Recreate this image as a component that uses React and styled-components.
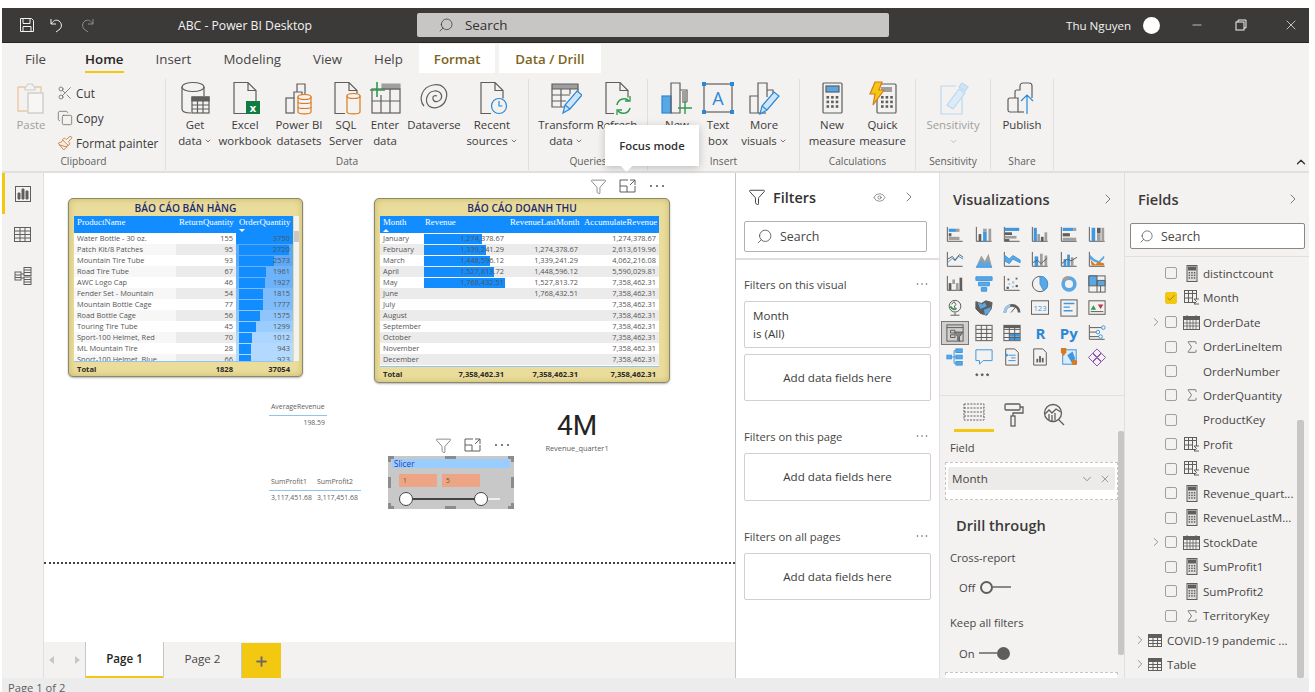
import React from "react";
import styled, { createGlobalStyle } from "styled-components";
import { Scissors, Copy, Paintbrush, Search, Filter, ChevronRight, ChevronDown, ChevronUp, X, Minus, Eye, Check, Plus, Sigma } from "lucide-react";

const D = "#5f5e5c";
const B = "#3f97e0";
const L = "#9fc5e8";
const M = "#a19f9d";
const YELLOW = "#f2c811";
const UI = `"Open Sans", "Noto Sans", sans-serif`;

const GlobalStyle = createGlobalStyle`
  html, body { margin: 0; padding: 0; background: #fff; }
  body { font-family: ${UI}; color: #323130; }
  * { box-sizing: border-box; }
`;

const Page = styled.div`
  width: 1315px;
  height: 692px;
  padding: 8px 6px 0 2px;
  overflow: hidden;
  background: #fff;
  display: flex;
  flex-direction: column;
`;

/* title bar */
const TitleBar = styled.div`
  flex: none;
  height: 35px;
  background: #3b3a39;
  border-bottom: 1px solid #252423;
  display: flex;
  align-items: center;
  color: #f3f2f1;
`;
const QuickIcon = styled.span`
  width: 30px;
  display: flex;
  justify-content: center;
  opacity: ${(p) => (p.$dim ? 0.45 : 1)};
`;
const QuickGroup = styled.div`
  display: flex;
  width: 176px;
  padding-left: 10px;
`;
const AppName = styled.div`
  width: 239px;
  font-size: 12.2px;
`;
const SearchBar = styled.div`
  width: 472px;
  height: 24px;
  background: #c8c6c4;
  border-radius: 2px;
  display: flex;
  align-items: center;
  gap: 11px;
  padding-left: 21px;
  font-size: 13.4px;
  color: #323130;
`;
const UserName = styled.div`
  margin-left: 177px;
  width: 77px;
  font-size: 11.6px;
`;
const Avatar = styled.div`
  width: 17px;
  height: 17px;
  border-radius: 50%;
  background: #fff;
`;
const WindowBtn = styled.span`
  display: flex;
  justify-content: center;
  width: ${(p) => p.$w}px;
  margin-left: ${(p) => p.$ml || 0}px;
`;

/* tabs */
const TabRow = styled.div`
  flex: none;
  height: 30px;
  background: #f3f2f1;
  display: flex;
  padding-left: 7px;
`;
const Tab = styled.div`
  position: relative;
  padding: 0 16px;
  margin-right: ${(p) => p.$mr || 0}px;
  font-size: 13.3px;
  line-height: 32px;
  color: ${(p) => (p.$active ? "#252423" : "#484644")};
  font-weight: ${(p) => (p.$active ? 600 : 400)};
  ${(p) =>
    p.$active &&
    `&::after { content: ""; position: absolute; left: 16px; right: 16px; bottom: 0; height: 2.5px; background: ${YELLOW}; }`}
`;
const ContextTab = styled.div`
  background: #fff;
  padding: 0 15px;
  margin: 1px 4px 0 0;
  width: ${(p) => p.$w}px;
  font-size: 13.3px;
  font-weight: 600;
  line-height: 31px;
  color: #7c6420;
  white-space: nowrap;
  text-align: center;
`;

/* ribbon */
const Ribbon = styled.div`
  position: relative;
  flex: none;
  height: 100px;
  background: #f3f2f1;
  border-bottom: 2px solid #e1dfdd;
  display: flex;
  padding-top: 6px;
`;
const Group = styled.div`
  flex: none;
  width: ${(p) => p.$w}px;
  height: 91px;
  border-right: ${(p) => (p.$last ? "1px solid #e1dfdd" : "1px solid #e1dfdd")};
  display: flex;
  flex-direction: column;
`;
const GroupBody = styled.div`
  flex: 1;
  display: flex;
  padding-left: ${(p) => p.$pad || 0}px;
`;
const GroupLabel = styled.div`
  height: 13px;
  margin-bottom: 2px;
  font-size: 10.2px;
  line-height: 13px;
  color: #605e5c;
  text-align: center;
`;
const RibbonBtn = styled.div`
  flex: none;
  width: ${(p) => p.$w}px;
  display: flex;
  flex-direction: column;
  align-items: center;
  color: ${(p) => (p.$off ? "#a19f9d" : "#3b3a39")};
  font-size: 11.4px;
  line-height: 16px;
`;
const BtnIcon = styled.div`
  height: 37px;
  display: flex;
  align-items: center;
  margin-bottom: 1px;
`;
const BtnLine = styled.span`
  white-space: nowrap;
  display: flex;
  align-items: center;
  gap: 2px;
`;
const SmallList = styled.div`
  display: flex;
  flex-direction: column;
  gap: 2px;
  padding-top: 2px;
`;
const SmallBtn = styled.div`
  height: 23px;
  display: flex;
  align-items: center;
  gap: 3px;
  font-size: 11.8px;
  color: #3b3a39;
  white-space: nowrap;
`;
const Collapse = styled.span`
  position: absolute;
  right: 1px;
  bottom: 2px;
  display: flex;
`;
const Tooltip = styled.div`
  position: absolute;
  left: 605px;
  top: 125px;
  z-index: 5;
  width: 94px;
  height: 41px;
  background: #fff;
  box-shadow: 0 2px 8px rgba(0, 0, 0, 0.22);
  font-size: 11.3px;
  font-weight: 600;
  line-height: 41px;
  text-align: center;
  color: #323130;
  &::after {
    content: "";
    position: absolute;
    left: 17px;
    bottom: -4px;
    width: 9px;
    height: 9px;
    background: #fff;
    transform: rotate(45deg);
  }
`;

/* main */
const Main = styled.div`
  flex: none;
  height: 505px;
  display: flex;
`;
const Rail = styled.div`
  flex: none;
  width: 42px;
  background: #f3f2f1;
  border-right: 1px solid #e1dfdd;
  display: flex;
  flex-direction: column;
`;
const RailItem = styled.div`
  height: 41px;
  display: flex;
  align-items: center;
  justify-content: center;
  border-left: 3px solid ${(p) => (p.$active ? YELLOW : "transparent")};
  padding-right: 3px;
`;
const Center = styled.div`
  flex: none;
  width: 691px;
  display: flex;
  flex-direction: column;
`;
const Canvas = styled.div`
  position: relative;
  flex: none;
  height: 469px;
  background: #fff;
`;
const PageEdge = styled.div`
  position: absolute;
  left: 0;
  right: 0;
  top: 389px;
  border-top: 2px dotted #444;
`;
const Card = styled.div`
  position: absolute;
  left: ${(p) => p.$x}px;
  top: ${(p) => p.$y}px;
  width: ${(p) => p.$w}px;
  height: ${(p) => p.$h}px;
  padding: 0 5px;
  border: 1px solid #8b8871;
  border-radius: 5px;
  background: #eadd9c;
  box-shadow: inset 0 0 7px #c9b869, 0 1px 2px rgba(0, 0, 0, 0.3);
`;
const CardTitle = styled.div`
  height: 17px;
  font-size: 10.2px;
  font-weight: 600;
  line-height: 18px;
  text-align: center;
  color: #1e2a70;
`;
const TableRow = styled.div`
  display: grid;
  grid-template-columns: ${(p) => p.$cols};
  height: ${(p) => p.$h || 11}px;
`;
const HeadRow = styled(TableRow)`
  background: #118dff;
  color: #fff;
  font-family: "Liberation Serif", serif;
  font-size: 8.8px;
  line-height: 11px;
`;
const HeadCell = styled.div`
  position: relative;
  padding: 1px 0 0 3px;
  white-space: nowrap;
  &::after {
    content: "";
    display: ${(p) => (p.$sort ? "block" : "none")};
    position: absolute;
    left: 3px;
    bottom: 1px;
    border-left: 3px solid transparent;
    border-right: 3px solid transparent;
    ${(p) => (p.$sort === "up" ? "border-bottom: 3px solid #fff;" : "border-top: 3px solid #fff;")}
  }
`;
const Rows = styled.div`
  height: ${(p) => p.$h}px;
  overflow: hidden;
  background: #fff;
  border-bottom: 1px solid #8ec5f5;
`;
const Cell = styled.div`
  position: relative;
  padding: 0 3px;
  font-size: 7.4px;
  line-height: 11px;
  color: #555;
  white-space: nowrap;
  text-align: ${(p) => (p.$right ? "right" : "left")};
  background: ${(p) => p.$bg || "transparent"};
`;
const CellBar = styled.div`
  position: absolute;
  left: ${(p) => p.$left}px;
  top: 0.5px;
  bottom: 0.5px;
  background: #118dff;
`;
const CellText = styled.span`
  position: relative;
`;
const TotalRow = styled(TableRow)`
  height: 15px;
  font-size: 7.6px;
  font-weight: 700;
  line-height: 14px;
  color: #2b2a29;
`;
const TotalCell = styled.div`
  padding: 0 3px;
  text-align: ${(p) => (p.$right ? "right" : "left")};
`;
const TableWrap = styled.div`
  width: ${(p) => p.$w}px;
`;
const ScrollTrack = styled.div`
  position: absolute;
  left: 225px;
  top: 17px;
  width: 5px;
  height: 145px;
  background: #f2f2f2;
  &::after {
    content: "";
    position: absolute;
    left: 0;
    right: 0;
    top: 15px;
    height: 11px;
    background: #c8c8c8;
  }
`;

const FreeText = styled.div`
  position: absolute;
  left: ${(p) => p.$x}px;
  top: ${(p) => p.$y}px;
  width: ${(p) => p.$w}px;
  font-size: ${(p) => p.$size || 7}px;
  line-height: ${(p) => p.$lh || 10}px;
  color: ${(p) => p.$color || "#605e5c"};
  text-align: ${(p) => p.$align || "left"};
  white-space: nowrap;
`;
const BigNumber = styled(FreeText)`
  font-family: Roboto, sans-serif;
  font-weight: 400;
`;
const MiniTable = styled.div`
  position: absolute;
  left: ${(p) => p.$x}px;
  top: ${(p) => p.$y}px;
  width: ${(p) => p.$w}px;
  display: grid;
  grid-template-columns: ${(p) => p.$cols};
  font-size: 6.9px;
  line-height: 11px;
  color: #605e5c;
  white-space: nowrap;
`;
const MiniHead = styled.div`
  padding: 0 2px 3px;
  border-bottom: 1px solid #8cc4f4;
`;
const MiniCell = styled.div`
  padding: 1px 2px 0;
  text-align: ${(p) => (p.$right ? "right" : "left")};
`;
const HeaderIcons = styled.div`
  position: absolute;
  left: ${(p) => p.$x}px;
  top: ${(p) => p.$y}px;
  display: flex;
  align-items: center;
  height: 18px;
`;
const HeaderIcon = styled.span`
  width: 29px;
  display: flex;
  justify-content: center;
`;

const Slicer = styled.div`
  position: absolute;
  left: 344px;
  top: 283px;
  width: 126px;
  height: 53px;
  background: #c8c8c8;
  padding: 3px 4px;
`;
const SlicerTitle = styled.div`
  height: 9px;
  background: #99ccff;
  padding-left: 2px;
  font-size: 8.2px;
  line-height: 10px;
  color: #2a3fb0;
`;
const SlicerInputs = styled.div`
  display: flex;
  gap: 5px;
  margin: 6px 0 0 7px;
`;
const SlicerInput = styled.div`
  width: 38px;
  height: 13px;
  background: #eea586;
  padding-left: 4px;
  font-size: 6.6px;
  line-height: 13px;
  color: #555;
`;
const SlicerTrack = styled.div`
  position: relative;
  height: 2px;
  width: 94px;
  margin: 11px 0 0 14px;
  background: linear-gradient(90deg, #444 80%, #eee 80%);
`;
const SlicerKnob = styled.div`
  position: absolute;
  top: -6px;
  left: ${(p) => p.$x}px;
  width: 14px;
  height: 14px;
  border-radius: 50%;
  border: 1.5px solid #444;
  background: #fff;
`;
const Handle = styled.div`
  position: absolute;
  background: ${(p) => (p.$corner ? "transparent" : "#8c8c8c")};
  width: ${(p) => (p.$corner ? 6 : p.$wide ? 11 : 3)}px;
  height: ${(p) => (p.$corner ? 6 : p.$wide ? 3 : 11)}px;
  ${(p) => p.$pos}
  ${(p) => p.$corner && p.$corner.map((s) => `border-${s}: 3px solid #8c8c8c;`).join("")}
`;

const PageTabs = styled.div`
  flex: 1;
  background: #f3f2f1;
  display: flex;
  align-items: stretch;
`;
const TabArrows = styled.div`
  width: 41px;
  display: flex;
  align-items: center;
  justify-content: space-between;
  padding: 0 5px 4px 5px;
`;
const Arrow = styled.span`
  width: 0;
  height: 0;
  border-top: 4px solid transparent;
  border-bottom: 4px solid transparent;
  ${(p) => (p.$right ? "border-left: 5px solid #c8c6c4;" : "border-right: 5px solid #c8c6c4;")}
`;
const PageTab = styled.div`
  width: 78px;
  margin-bottom: 1px;
  border-left: 1px solid #c8c6c4;
  border-bottom: 4px solid ${(p) => (p.$active ? YELLOW : "transparent")};
  background: ${(p) => (p.$active ? "#fff" : "transparent")};
  font-size: 11.6px;
  font-weight: ${(p) => (p.$active ? 600 : 400)};
  color: ${(p) => (p.$active ? "#252423" : "#484644")};
  line-height: 34px;
  text-align: center;
`;
const AddPage = styled.div`
  width: 40px;
  margin: 1px 0 2px;
  background: ${YELLOW};
  border-left: 1px solid #c8c6c4;
  display: flex;
  align-items: center;
  justify-content: center;
`;

/* filters */
const FiltersPane = styled.div`
  flex: none;
  width: 205px;
  background: #fff;
  border-left: 1px solid #c8c6c4;
  border-right: 1px solid #e1dfdd;
`;
const PaneHead = styled.div`
  height: 48px;
  padding: 0 9px 0 12px;
  display: flex;
  align-items: center;
  font-size: 14.4px;
  font-weight: 600;
  color: #323130;
`;
const PaneTitle = styled.span`
  flex: 1;
  margin-left: ${(p) => p.$ml || 0}px;
`;
const PaneTool = styled.span`
  display: flex;
  width: ${(p) => p.$w}px;
  justify-content: center;
`;
const SearchBox = styled.div`
  width: ${(p) => p.$w}px;
  height: ${(p) => p.$h}px;
  margin-left: ${(p) => p.$ml}px;
  background: #fff;
  border: 1px solid ${(p) => p.$line};
  border-radius: 2px;
  display: flex;
  align-items: center;
  gap: 7px;
  padding-left: ${(p) => p.$pad}px;
  font-size: 12.4px;
  color: #484644;
`;
const PaneRule = styled.div`
  height: 2px;
  margin-top: ${(p) => p.$mt}px;
  background: #e1dfdd;
`;
const FilterSection = styled.div`
  margin-top: ${(p) => p.$mt}px;
  padding-left: 8px;
`;
const FilterHead = styled.div`
  width: 187px;
  height: 20px;
  margin-bottom: 7px;
  padding-right: 3px;
  display: flex;
  align-items: center;
  justify-content: space-between;
  font-size: 11.2px;
  color: #484644;
`;
const FilterBox = styled.div`
  width: 187px;
  height: ${(p) => p.$h}px;
  margin-top: ${(p) => p.$mt || 0}px;
  border: 1px solid #d2d0ce;
  border-radius: 2px;
  font-size: 11.6px;
  color: #3b3a39;
  display: flex;
  flex-direction: column;
  justify-content: center;
  align-items: ${(p) => (p.$left ? "flex-start" : "center")};
  line-height: 18px;
  padding-left: ${(p) => (p.$left ? 8 : 0)}px;
`;

/* visualizations */
const VizPane = styled.div`
  position: relative;
  flex: none;
  width: 185px;
  background: #f3f2f1;
  border-right: 1px solid #e1dfdd;
  overflow: hidden;
`;
const VizHead = styled.div`
  height: 50px;
  padding: 2px 8px 0 13px;
  display: flex;
  align-items: center;
  font-size: 14.6px;
  font-weight: 600;
  color: #3b3a39;
`;
const VizGrid = styled.div`
  display: grid;
  grid-template-columns: repeat(6, 28.4px);
  grid-auto-rows: 24.4px;
  padding-left: 1px;
  height: 171px;
`;
const VizCell = styled.div`
  display: flex;
  align-items: center;
  justify-content: center;
  ${(p) => p.$on && "background: #d2d0ce; outline: 1.5px solid #7a7876; outline-offset: -1.5px;"}
`;
const VizLetter = styled.span`
  font-size: ${(p) => p.$size}px;
  font-weight: 700;
  color: #2b88d8;
`;
const VizTabs = styled.div`
  margin-top: 1px;
  border-top: 1px solid #e1dfdd;
  height: 37px;
  display: flex;
  padding-left: 14px;
`;
const VizTab = styled.div`
  width: 40px;
  display: flex;
  justify-content: center;
  padding-top: 7px;
  border-bottom: 3px solid ${(p) => (p.$on ? YELLOW : "transparent")};
`;
const WellLabel = styled.div`
  margin: 8px 0 0 10px;
  font-size: 11.2px;
  line-height: 16px;
  color: #484644;
`;
const Well = styled.div`
  width: 173px;
  height: 38px;
  margin: 6px 0 0 5px;
  background: #fff;
  border: 1px dashed #c8c6c4;
  padding: 4px 2px;
`;
const Pill = styled.div`
  height: 23px;
  background: #edebe9;
  border-radius: 2px;
  display: flex;
  align-items: center;
  padding: 0 4px;
  gap: 5px;
  font-size: 11.6px;
  color: #484644;
`;
const PillName = styled.span`
  flex: 1;
`;
const DrillTitle = styled.div`
  margin: 14px 0 0 16px;
  font-size: 14.6px;
  font-weight: 600;
  line-height: 22px;
  color: #3b3a39;
`;
const OptionLabel = styled.div`
  margin: ${(p) => p.$mt}px 0 0 10px;
  font-size: 11.2px;
  line-height: 16px;
  color: #484644;
`;
const ToggleRow = styled.div`
  margin: ${(p) => p.$mt}px 0 0 19px;
  height: 16px;
  display: flex;
  align-items: center;
  font-size: 11.2px;
  color: #484644;
`;
const ToggleName = styled.span`
  width: ${(p) => p.$w}px;
`;
const Knob = styled.span`
  width: 13px;
  height: 13px;
  border-radius: 50%;
  border: 2px solid #5f5e5c;
  background: ${(p) => (p.$on ? "#5f5e5c" : "transparent")};
`;
const KnobLine = styled.span`
  width: ${(p) => p.$w}px;
  height: 2px;
  background: #8a8886;
`;
const WellStub = styled.div`
  width: 173px;
  height: 20px;
  margin: 11px 0 0 5px;
  background: #fff;
  border: 1px dashed #c8c6c4;
`;
const Scroller = styled.div`
  position: absolute;
  left: ${(p) => p.$x}px;
  top: ${(p) => p.$y}px;
  width: ${(p) => p.$w}px;
  height: ${(p) => p.$h}px;
  background: #c8c6c4;
  border-radius: 2px;
`;

/* fields */
const FieldsPane = styled.div`
  position: relative;
  flex: none;
  width: 184px;
  background: #f3f2f1;
`;
const FieldRule = styled.div`
  height: 1px;
  margin-top: 7px;
  background: #e1dfdd;
`;
const FieldList = styled.div`
  padding-top: 4px;
`;
const FieldRow = styled.div`
  height: 24.46px;
  display: flex;
  align-items: center;
  padding-left: ${(p) => p.$pad}px;
  font-size: 11.6px;
  color: #484644;
  white-space: nowrap;
`;
const Chevron = styled.span`
  width: ${(p) => p.$w}px;
  display: flex;
`;
const CheckBox = styled.span`
  flex: none;
  width: 12px;
  height: 12px;
  margin-right: 6px;
  border-radius: 2px;
  border: 1px solid ${(p) => (p.$on ? YELLOW : "#a19f9d")};
  background: ${(p) => (p.$on ? YELLOW : "transparent")};
  display: flex;
  align-items: center;
  justify-content: center;
`;
const FieldIcon = styled.span`
  flex: none;
  width: ${(p) => p.$w}px;
  display: flex;
  justify-content: center;
`;

const StatusBar = styled.div`
  flex: none;
  height: 14px;
  background: #ececec;
  padding-left: 6px;
  font-size: 11.2px;
  line-height: 19px;
  color: #605e5c;
`;

/* drawings */
const Svg = ({ w = 32, h = 34, vb, children, stroke = D, sw = 1.2 }) => (
  <svg width={w} height={h} viewBox={vb || `0 0 ${w} ${h}`} fill="none" stroke={stroke} strokeWidth={sw}>
    {children}
  </svg>
);
const DOC = "M5 1.5h14l8 8v23H5z M19 1.5v8h8";

const PasteIcon = () => (
  <Svg w={30} h={32} stroke="#e8c9a0">
    <path d="M2 5h7M19 5h6v5M2 5v24h9" strokeWidth="1.4" />
    <path d="M9 6l3-4h4l3 4v2H9z" stroke="#cfcdcb" />
    <rect x="12" y="11" width="15" height="20" stroke="#c8c6c4" fill="#f7f6f5" />
  </Svg>
);
const GetDataIcon = () => (
  <Svg>
    <ellipse cx="14" cy="6" rx="11" ry="4.5" />
    <path d="M3 6v22c0 2.5 4 4 9 4M25 6v9" />
    <rect x="13" y="16" width="17" height="16" fill="#f3f2f1" />
    <path d="M13 16h17v4H13z" fill={D} />
    <path d="M18.5 20v12M24 20v12M13 24h17M13 28h17" />
  </Svg>
);
const ExcelIcon = () => (
  <Svg>
    <path d={DOC} />
    <rect x="17" y="20" width="14" height="13" fill="#107c41" stroke="none" />
    <text x="24" y="30.5" fontSize="11" fontWeight="700" fill="#fff" stroke="none" textAnchor="middle" fontFamily="Open Sans">x</text>
  </Svg>
);
const Cylinder = ({ x, y, w, h }) => (
  <g stroke="#d97a1e" fill="#f3f2f1">
    <path d={`M${x} ${y + 2}v${h - 4}c0 2.5 ${w} 2.5 ${w} 0v${-(h - 4)}z`} />
    <ellipse cx={x + w / 2} cy={y + 2} rx={w / 2} ry="2.5" />
  </g>
);
const DatasetsIcon = () => (
  <Svg>
    <rect x="3" y="17" width="8" height="15" />
    <path d="M11 17v-6h8v5M14 11V3h8v10" />
    <Cylinder x={15} y={14} w={13} h={19} />
    <path d="M15 21c0 2 13 2 13 0M15 26c0 2 13 2 13 0" stroke="#d97a1e" />
  </Svg>
);
const SqlIcon = () => (
  <Svg>
    <path d="M15 32.5H5v-31h14l8 8v3M19 1.5v8h8" />
    <Cylinder x={17} y={13} w={13} h={20} />
  </Svg>
);
const EnterIcon = () => (
  <Svg>
    <path d="M13 3h18v5H13z" fill={M} stroke={M} />
    <rect x="3" y="8" width="28" height="24" />
    <path d="M12 14v18M21 8v24M3 20h28" />
    <path d="M1 9h15M8 1v15" stroke="#2e9a4e" strokeWidth="1.6" />
  </Svg>
);
const DataverseIcon = () => (
  <Svg>
    <path d="M6 25C0 18 4 6 15 4c9-2 16 5 13 14-2 8-12 11-17 7C6 20 9 11 16 10c6-1 9 4 7 8-2 3-7 4-8 0-1-3 2-4 4-3" />
  </Svg>
);
const RecentIcon = () => (
  <Svg>
    <path d="M15 32.5H5v-31h14l8 8v8M19 1.5v8h8" />
    <circle cx="23" cy="25" r="7.5" stroke="#2b88d8" />
    <path d="M23 20v5h3.5" stroke="#2b88d8" />
  </Svg>
);
const Pencil = ({ dx = 0, dy = 0 }) => (
  <g transform={`translate(${dx} ${dy})`} stroke="#2b88d8">
    <path d="M6 26l2-8L20 4l5 4-12 14z" fill="#cfe4f7" />
    <path d="M8 18l5 4" />
  </g>
);
const TransformIcon = () => (
  <Svg>
    <path d="M2 3h26v5H2z" fill={M} stroke={D} />
    <path d="M2 8v18h14M28 8v4M11 8v18M20 8v5M2 14h18M2 20h14" />
    <Pencil dx={7} dy={6} />
  </Svg>
);
const RefreshIcon = () => (
  <Svg>
    <path d="M13 32.5H5v-31h14l8 8v7M19 1.5v8h8" />
    <path d="M16 24a7 7 0 0 1 12-4M29 27a7 7 0 0 1-12 3" stroke="#2e9a4e" strokeWidth="1.5" />
    <path d="M29 15v5h-5M16 34v-5h5" stroke="#2e9a4e" strokeWidth="1.3" />
  </Svg>
);
const NewVisualIcon = () => (
  <Svg>
    <rect x="1" y="15" width="9" height="17" fill="#5aa7e6" stroke="#2b88d8" />
    <path d="M10 32V2h9v30H10zM19 9h7v12" />
    <path d="M21 10h5v12h-5z" fill="#a19f9d" stroke="none" />
    <path d="M17 27h14M24 20v13" stroke="#2e9a4e" strokeWidth="1.4" />
  </Svg>
);
const TextBoxIcon = () => (
  <Svg>
    <rect x="2" y="3" width="28" height="28" stroke={D} />
    <g fill="#2b88d8" stroke="none">
      <rect x="0" y="1" width="4" height="4" />
      <rect x="28" y="1" width="4" height="4" />
      <rect x="0" y="29" width="4" height="4" />
      <rect x="28" y="29" width="4" height="4" />
    </g>
    <text x="16" y="24" fontSize="18" fill="#2b88d8" stroke="none" textAnchor="middle" fontFamily="Open Sans">A</text>
  </Svg>
);
const MoreVisualsIcon = () => (
  <Svg>
    <path d="M2 32V15h8v17zM10 15V2h9v14M19 9h6v6" />
    <path d="M10 32h8" />
    <Pencil dx={6} dy={7} />
  </Svg>
);
const CalcKeys = ({ x, y, n = 3, s = 2.6, gap = 4.6 }) => (
  <g fill={D} stroke="none">
    {[0, 1, 2].map((r) =>
      Array.from({ length: n }).map((_, c) => <rect key={`${r}${c}`} x={x + c * gap} y={y + r * gap} width={s} height={s} />)
    )}
  </g>
);
const MeasureIcon = () => (
  <Svg>
    <rect x="7" y="2" width="19" height="30" rx="1" />
    <rect x="10" y="5" width="13" height="6" fill="#5aa7e6" stroke={D} />
    <CalcKeys x={10.5} y={15} />
  </Svg>
);
const QuickIconSvg = () => (
  <Svg>
    <rect x="10" y="3" width="19" height="29" rx="1" />
    <rect x="14" y="6" width="11" height="5" fill={M} stroke="none" />
    <CalcKeys x={14} y={15} />
    <path d="M8 1h7l-3 8h5L6 24l2-11H3z" fill="#f2c811" stroke="#d97a1e" />
  </Svg>
);
const SensitivityIcon = () => (
  <Svg stroke="#b9d8ef">
    <path d="M4 5h15M4 5v28h21V16" />
    <path d="M10 24l12-16 6 4-12 16z" fill="#dcebf7" />
    <path d="M22 6l3-4 6 4-3 4z" fill="#cfe4f7" />
  </Svg>
);
const PublishIcon = () => (
  <Svg>
    <path d="M4 31a2 2 0 0 1-2-2V19a2 2 0 0 1 2-2h8v14zM9 17V11a2 2 0 0 1 2-2h3V5a3 3 0 0 1 3-3h6a3 3 0 0 1 3 3v12" />
    <path d="M12 31h6" />
    <path d="M21 33V14M15 20l6-6 6 6" stroke="#2b88d8" />
  </Svg>
);
const SaveIcon = () => (
  <Svg w={16} h={16} stroke="#f3f2f1" sw={1}>
    <path d="M1.5 1.5h11l2 2v11h-13zM4 1.5v5h7v-5M4 14.5v-5h8v5" />
  </Svg>
);
const UndoIcon = ({ flip }) => (
  <Svg w={16} h={16} stroke="#f3f2f1" sw={1}>
    <g transform={flip ? "matrix(-1 0 0 1 16 0)" : undefined}>
      <path d="M2 2v5h5M2 7c2-3 5-5 8-3 3 2 3 6 1 8l-4 3" />
    </g>
  </Svg>
);
const RestoreIcon = () => (
  <Svg w={12} h={12} stroke="#f3f2f1" sw={1}>
    <rect x="1" y="3" width="8" height="8" />
    <path d="M3 3V1h8v8H9" />
  </Svg>
);
const FocusIcon = () => (
  <Svg w={17} h={14} stroke={D} sw={1}>
    <path d="M9 1H1v12h15V7" />
    <path d="M1 7h7v6" />
    <path d="M11 1h5v5M16 1l-5 5" />
  </Svg>
);
const Dots = ({ w = 16 }) => (
  <svg width={w} height="4" viewBox="0 0 16 4" fill={D}>
    <circle cx="2" cy="2" r="1.1" />
    <circle cx="8" cy="2" r="1.1" />
    <circle cx="14" cy="2" r="1.1" />
  </svg>
);
const ReportRailIcon = () => (
  <Svg w={16} h={16} sw={1}>
    <rect x="0.5" y="0.5" width="15" height="15" />
    <path d="M3 13V7h2v6zM7 13V3h2v10zM11 13V5h2v8z" fill={D} />
  </Svg>
);
const GridRailIcon = () => (
  <Svg w={17} h={15} sw={1}>
    <rect x="0.5" y="0.5" width="16" height="14" />
    <path d="M0.5 4h16M0.5 7.5h16M0.5 11h16M6 0.5v14M11 0.5v14" />
  </Svg>
);
const ModelRailIcon = () => (
  <Svg w={18} h={18} sw={1}>
    <rect x="1" y="5" width="6" height="8" />
    <path d="M1 8h6M1 10.5h6" />
    <rect x="10" y="0.5" width="7" height="8" />
    <path d="M10 3h7M10 5.5h7" />
    <rect x="10" y="10" width="7" height="7.5" />
    <path d="M10 12.5h7M10 15h7M7 7h3M7 11h3" />
  </Svg>
);
const RollerIcon = () => (
  <Svg w={20} h={24} sw={1.3}>
    <rect x="1" y="1" width="15" height="6" rx="1" />
    <path d="M16 4h3v6H9v3" />
    <rect x="7" y="13" width="4" height="10" />
  </Svg>
);
const AnalyticsIcon = () => (
  <Svg w={22} h={24} sw={1.3}>
    <circle cx="10" cy="10" r="8.5" />
    <path d="M2 11l4-4 3 3 4-4 5 3M15.5 16.5L21 22" />
    <path d="M6 11v6M9 12v6M12 10v7" />
  </Svg>
);
const FieldsTabIcon = () => (
  <Svg w={22} h={18} sw={1}>
    <rect x="1" y="1" width="20" height="16" strokeDasharray="2 1.2" />
    <path d="M1 5h20M1 9h20M1 13h20" strokeDasharray="2 1.2" />
  </Svg>
);
const CalcField = () => (
  <Svg w={12} h={17} sw={1}>
    <rect x="1" y="0.5" width="10" height="16" fill="#e1dfdd" />
    <rect x="2.5" y="2" width="7" height="3" fill={D} />
    <CalcKeys x={2.6} y={7} s={1.5} gap={2.6} />
  </Svg>
);
const TableSigmaField = () => (
  <Svg w={16} h={15} sw={1}>
    <rect x="0.5" y="0.5" width="12" height="12" />
    <path d="M0.5 3.5h12M4.5 0.5v12M8.5 0.5v12M0.5 8h8" />
    <path d="M15 9h-5l2.5 2.5L10 14h5" fill="#f3f2f1" />
  </Svg>
);
const CalendarField = () => (
  <Svg w={17} h={15} sw={1}>
    <rect x="0.5" y="1.5" width="16" height="13" />
    <path d="M0.5 1.5h16v3h-16z" fill={D} />
    <path d="M4 0v3M13 0v3M0.5 8h16M0.5 11h16M4 5v9M7 5v9M10 5v9M13 5v9" strokeWidth="0.8" />
  </Svg>
);
const TableField = () => (
  <Svg w={14} h={13} sw={1}>
    <rect x="0.5" y="0.5" width="13" height="12" />
    <path d="M0.5 0.5h13v3h-13z" fill={D} />
    <path d="M0.5 6.5h13M0.5 9.5h13M5 3.5v9M9.5 3.5v9" />
  </Svg>
);

const Rect = (x, y, w, h, c = B) => <rect key={`${x}${y}${w}${c}`} x={x} y={y} width={w} height={h} fill={c} stroke="none" />;
const AXIS = <path d="M1.5 1v16h17" />;
const VizSvg = ({ children }) => (
  <Svg w={18} h={18} vb="0 0 20 20" sw={1.1}>
    {children}
  </Svg>
);
const vizIcons = [
  <>{AXIS}{Rect(3, 3, 8, 3.5)}{Rect(11, 3, 4, 3.5, M)}{Rect(3, 8, 3, 3.5, D)}{Rect(3, 12, 12, 3.5, M)}</>,
  <>{AXIS}{Rect(4, 9, 3, 8, D)}{Rect(9, 6, 4, 11)}{Rect(9, 3, 4, 3, M)}{Rect(15, 3, 3, 14, M)}</>,
  <>{AXIS}{Rect(2, 2, 16, 3.5)}{Rect(2, 7, 8, 3, D)}{Rect(2, 11, 13, 3, M)}{Rect(2, 14.5, 5, 2.5, D)}</>,
  <>{AXIS}{Rect(3, 2, 3.5, 15)}{Rect(7, 9, 3, 8, M)}{Rect(11, 12, 3, 5, D)}{Rect(15, 7, 3, 10, M)}</>,
  <>{AXIS}{Rect(3, 2, 12, 3.5)}{Rect(15, 2, 3, 3.5, M)}{Rect(3, 8, 8, 3.5, D)}{Rect(3, 13, 15, 3.5, M)}</>,
  <>{AXIS}{Rect(4, 2, 4, 15)}{Rect(10, 2, 4, 6, D)}{Rect(10, 8, 4, 9, M)}{Rect(15, 2, 3, 15, M)}</>,
  <>{AXIS}<path d="M2 13l5-5 3 3 4-5 5 3" stroke={B} /><path d="M2 9l5-3 3 4 5-6 4 3" /></>,
  <><path d="M1 18L7 5l4 6 4-8 4 15z" fill={M} stroke="none" /><path d="M1 18l6-8 4 4 4-3 4 7z" fill="#5aa7e6" stroke="none" /><path d="M1 18h18" stroke={B} /></>,
  <>{AXIS}<path d="M2 5l5 4 4-4 8 5v3l-8-4-4 5-5-3z" fill="#5aa7e6" stroke={B} /></>,
  <>{AXIS}{Rect(4, 6, 4, 11)}{Rect(10, 3, 3, 14, M)}{Rect(15, 5, 3, 12, M)}<path d="M2 13l5-3 4 4 7-6" /></>,
  <>{AXIS}{Rect(4, 9, 3, 8)}{Rect(8, 4, 3, 13)}{Rect(12, 7, 3, 10, M)}<path d="M2 14l6-5 4 2 7-4" /></>,
  <>{AXIS}<path d="M2 4l5 5 5 2 6-6v3l-6 6-5-2-5-3z" fill="#5aa7e6" stroke="none" /><path d="M3 10l5 5 4-3 6 2v2H4z" fill="#d97a1e" stroke="none" /></>,
  <>{AXIS}{Rect(3, 9, 3, 8, D)}{Rect(7, 5, 3, 5, M)}{Rect(11, 9, 3, 8, M)}{Rect(15, 3, 3, 14, D)}</>,
  <><path d="M1 2h18v4H1z" fill="#5aa7e6" stroke={B} /><path d="M4 8h12v4H4z" fill="#5aa7e6" stroke={B} /><path d="M7 14h6v4H7z" fill="#5aa7e6" stroke={B} /></>,
  <>{AXIS}{Rect(5, 4, 2, 2, D)}{Rect(10, 7, 2.5, 2.5, L)}{Rect(6, 9, 2, 2, L)}{Rect(14, 3, 2, 2, D)}{Rect(4, 13, 2.5, 2.5, D)}{Rect(14, 11, 2.5, 2.5, D)}{Rect(10, 12, 2, 2, L)}</>,
  <><circle cx="10" cy="10" r="8.5" /><path d="M10 10V1.5a8.5 8.5 0 0 1 4 16z" fill="#5aa7e6" stroke={B} /></>,
  <><circle cx="10" cy="10" r="6.5" strokeWidth="4" stroke="#5aa7e6" /><path d="M4 6a7 7 0 0 1 6-3" strokeWidth="4" stroke={M} /></>,
  <><rect x="1" y="1" width="18" height="18" /><path d="M1 1h9v11H1zM10 6h9v6h-9z" fill="#5aa7e6" stroke={D} /><path d="M10 12v7M14 12v7" /></>,
  <><circle cx="10" cy="8" r="6.5" /><path d="M6 6l3-3 2 3-2 3 3 2M5 18h10M10 15v3" /><path d="M5 8c1 3 4 4 6 3" stroke="#2e9a4e" strokeWidth="2" /></>,
  <><path d="M1 3l6 2 5-3 7 2-1 7-5 7-7-2-5-5z" fill={D} stroke={D} /><path d="M10 12l8-3-2 6-5 3z" fill="#5aa7e6" stroke="none" /><path d="M3 4l5 2 3-2 2 4-7 3z" fill="#5aa7e6" stroke="none" /></>,
  <><path d="M2 15a8 8 0 0 1 16 0" strokeWidth="3" stroke={D} /><path d="M2 15a8 8 0 0 1 6-7.6" strokeWidth="3" stroke={L} /><path d="M9 15l5-6" /></>,
  <><rect x="0.5" y="2" width="19" height="15" /><text x="10" y="13.5" fontSize="8.5" fill={B} stroke="none" textAnchor="middle" fontFamily="Open Sans">123</text></>,
  <><rect x="1" y="1" width="18" height="18" /><path d="M4 5h12M4 9h7M4 13h10" stroke={B} strokeWidth="1.5" /></>,
  <><rect x="1" y="2" width="18" height="15" /><path d="M3 12l3-5 3 5z" fill="#2e9a4e" stroke="none" /><path d="M11 6h6l-3 5z" fill="#c4314b" stroke="none" /><path d="M3 14h14" /></>,
  <><rect x="1" y="1" width="18" height="18" /><path d="M1 4h18M5 7h5v3H5zM5 12h5v3H5z" /><path d="M9 9h10l-4 5v5l-2-1v-4z" fill="#8a8886" stroke={D} /></>,
  <><rect x="1" y="1.5" width="18" height="17" /><path d="M1 6h18M1 10.5h18M1 15h18M7 1.5v17M13 1.5v17" /></>,
  <><rect x="1" y="1.5" width="18" height="17" />{Rect(7, 10, 12, 4)}{Rect(13, 14, 6, 4)}{Rect(7, 14, 6, 4)}{Rect(1, 1.5, 18, 3, D)}<path d="M1 6h18M1 10.5h18M1 15h18M7 1.5v17M13 1.5v17" /></>,
  <VizLetter $size={15}>R</VizLetter>,
  <VizLetter $size={15}>Py</VizLetter>,
  <>{AXIS}<path d="M2 4h13M2 9h7M2 14h10" /><circle cx="17" cy="4" r="2" stroke={B} /><circle cx="11" cy="9" r="2" stroke={B} /><circle cx="14" cy="14" r="2" stroke={B} /></>,
  <><rect x="1" y="8" width="5" height="4" fill="#5aa7e6" stroke={B} /><rect x="11" y="1" width="7" height="4" fill="#5aa7e6" stroke={B} /><rect x="11" y="8" width="7" height="4" fill="#5aa7e6" stroke={B} /><rect x="11" y="15" width="7" height="4" fill="#5aa7e6" stroke={B} /><path d="M6 10h5M9 3v14h2M9 3h2" stroke={B} /></>,
  <path d="M1 2h18v12H9l-4 4v-4H1z" stroke={B} />,
  <><path d="M3 1h10l4 4v14H3z" /><path d="M6 8h8M9 11h5M6 14h8" stroke={B} /><circle cx="4" cy="8" r="1.5" fill={B} stroke="none" /></>,
  <><path d="M3 1h10l4 4v14H3z" />{Rect(6, 12, 2, 4, D)}{Rect(9, 9, 2, 7, D)}{Rect(12, 11, 2, 5, D)}</>,
  <><rect x="3" y="2" width="15" height="16" fill="#dcebf7" stroke={B} /><path d="M8 8l6-4 3 8-4 4z" fill={B} stroke="none" /><path d="M1 0h6v5l-3 4-3-4z" fill="#d97a1e" stroke="none" /><circle cx="16" cy="16" r="3" fill="#d97a1e" stroke="none" /></>,
  <path d="M10 1l4.5 4.5L10 10 5.5 5.5zM5 6l4.500 4.500L5 15 .5 10.500zM15 6l4.500 4.500L15 15l-4.500-4.500zM10 11l4.500 4.500L10 20l-4.500-4.500z" stroke="#8a4fb0" />,
  <path d="M1 3h8l8 7-8 7H1l8-7zM6 3l8 7-8 7" stroke={B} strokeWidth="1.4" fill="#dcebf7" />,
  <Dots />,
];

const products = [
  ["Water Bottle - 30 oz.", 155, 3750, 52, "#118dff"],
  ["Patch Kit/8 Patches", 95, 2720, 50, "#5ba9f7"],
  ["Mountain Tire Tube", 93, 2573, 35, "#5ba9f7"],
  ["Road Tire Tube", 67, 1961, 27, "#6db3fb"],
  ["AWC Logo Cap", 46, 1927, 26, "#6db3fb"],
  ["Fender Set - Mountain", 54, 1815, 24, "#7fbcfc"],
  ["Mountain Bottle Cage", 77, 1777, 24, "#7fbcfc"],
  ["Road Bottle Cage", 56, 1575, 21, "#90c5fc"],
  ["Touring Tire Tube", 45, 1299, 17, "#9accfd"],
  ["Sport-100 Helmet, Red", 70, 1012, 13, "#add6fe"],
  ["ML Mountain Tire", 28, 943, 12, "#b3d9fe"],
  ["Sport-100 Helmet, Blue", 66, 923, 12, "#b3d9fe"],
];
const months = [
  ["January", "1,274,378.67", "", "1,274,378.67", 58],
  ["February", "1,339,241.29", "1,274,378.67", "2,613,619.96", 62],
  ["March", "1,448,596.12", "1,339,241.29", "4,062,216.08", 66],
  ["April", "1,527,813.72", "1,448,596.12", "5,590,029.81", 70],
  ["May", "1,768,432.51", "1,527,813.72", "7,358,462.31", 81],
  ["June", "", "1,768,432.51", "7,358,462.31", 0],
  ["July", "", "", "7,358,462.31", 0],
  ["August", "", "", "7,358,462.31", 0],
  ["September", "", "", "7,358,462.31", 0],
  ["October", "", "", "7,358,462.31", 0],
  ["November", "", "", "7,358,462.31", 0],
  ["December", "", "", "7,358,462.31", 0],
];
const fields = [
  ["distinctcount", "calc"],
  ["Month", "sigma", { on: true }],
  ["OrderDate", "date", { chev: true }],
  ["OrderLineItem", "sum"],
  ["OrderNumber", ""],
  ["OrderQuantity", "sum"],
  ["ProductKey", ""],
  ["Profit", "sigma"],
  ["Revenue", "sigma"],
  ["Revenue_quart...", "calc"],
  ["RevenueLastM...", "calc"],
  ["StockDate", "date", { chev: true }],
  ["SumProfit1", "calc"],
  ["SumProfit2", "calc"],
  ["TerritoryKey", "sum"],
];
const fieldIcon = {
  calc: <CalcField />,
  sigma: <TableSigmaField />,
  date: <CalendarField />,
  sum: <Sigma size={16} strokeWidth={1.2} color={D} />,
};

const COLS_SALES = "102px 60px 57px";
const COLS_REV = "42px 85px 74px 78px";

const Btn = ({ w, icon, lines, off, caret }) => (
  <RibbonBtn $w={w} $off={off}>
    <BtnIcon>{icon}</BtnIcon>
    {lines.map((l, i) => (
      <BtnLine key={l || i}>
        {l}
        {caret && i === lines.length - 1 && <ChevronDown size={8} strokeWidth={2} />}
      </BtnLine>
    ))}
  </RibbonBtn>
);

const App = () => {
  return (
    <>
      <GlobalStyle />
      <Tooltip>Focus mode</Tooltip>
      <Page>
        <TitleBar>
          <QuickGroup>
            <QuickIcon><SaveIcon /></QuickIcon>
            <QuickIcon><UndoIcon /></QuickIcon>
            <QuickIcon $dim><UndoIcon flip /></QuickIcon>
          </QuickGroup>
          <AppName>ABC - Power BI Desktop</AppName>
          <SearchBar>
            <Search size={16} strokeWidth={1.1} style={{ transform: "scaleX(-1)" }} />
            Search
          </SearchBar>
          <UserName>Thu Nguyen</UserName>
          <Avatar />
          <WindowBtn $w={16} $ml={29}><Minus size={14} strokeWidth={1.2} /></WindowBtn>
          <WindowBtn $w={16} $ml={28}><RestoreIcon /></WindowBtn>
          <WindowBtn $w={16} $ml={34}><X size={16} strokeWidth={1.1} /></WindowBtn>
        </TitleBar>

        <TabRow>
          <Tab $mr={7}>File</Tab>
          <Tab $active>Home</Tab>
          <Tab>Insert</Tab>
          <Tab>Modeling</Tab>
          <Tab>View</Tab>
          <Tab>Help</Tab>
          <ContextTab $w={76}>Format</ContextTab>
          <ContextTab $w={102}>Data / Drill</ContextTab>
        </TabRow>

        <Ribbon>
          <Group $w={164}>
            <GroupBody $pad={3}>
              <Btn w={52} off icon={<PasteIcon />} lines={["Paste"]} />
              <SmallList>
                <SmallBtn><Scissors size={16} strokeWidth={1.1} color={D} />Cut</SmallBtn>
                <SmallBtn><Copy size={16} strokeWidth={1.1} color={D} />Copy</SmallBtn>
                <SmallBtn><Paintbrush size={16} strokeWidth={1.3} color="#c9772a" />Format painter</SmallBtn>
              </SmallList>
            </GroupBody>
            <GroupLabel>Clipboard</GroupLabel>
          </Group>
          <Group $w={363}>
            <GroupBody $pad={6}>
              <Btn w={46} icon={<GetDataIcon />} lines={["Get", "data"]} caret />
              <Btn w={54} icon={<ExcelIcon />} lines={["Excel", "workbook"]} />
              <Btn w={54} icon={<DatasetsIcon />} lines={["Power BI", "datasets"]} />
              <Btn w={40} icon={<SqlIcon />} lines={["SQL", "Server"]} />
              <Btn w={38} icon={<EnterIcon />} lines={["Enter", "data"]} />
              <Btn w={60} icon={<DataverseIcon />} lines={["Dataverse"]} />
              <Btn w={56} icon={<RecentIcon />} lines={["Recent", "sources"]} caret />
            </GroupBody>
            <GroupLabel>Data</GroupLabel>
          </Group>
          <Group $w={119}>
            <GroupBody $pad={10}>
              <Btn w={54} icon={<TransformIcon />} lines={["Transform", "data"]} caret />
              <Btn w={48} icon={<RefreshIcon />} lines={["Refresh"]} />
            </GroupBody>
            <GroupLabel>Queries</GroupLabel>
          </Group>
          <Group $w={152}>
            <GroupBody $pad={8}>
              <Btn w={42} icon={<NewVisualIcon />} lines={["New"]} />
              <Btn w={40} icon={<TextBoxIcon />} lines={["Text", "box"]} />
              <Btn w={52} icon={<MoreVisualsIcon />} lines={["More", "visuals"]} caret />
            </GroupBody>
            <GroupLabel>Insert</GroupLabel>
          </Group>
          <Group $w={116}>
            <GroupBody $pad={4}>
              <Btn w={56} icon={<MeasureIcon />} lines={["New", "measure"]} />
              <Btn w={45} icon={<QuickIconSvg />} lines={["Quick", "measure"]} />
            </GroupBody>
            <GroupLabel>Calculations</GroupLabel>
          </Group>
          <Group $w={75}>
            <GroupBody>
              <RibbonBtn $w={74} $off>
                <BtnIcon><SensitivityIcon /></BtnIcon>
                <BtnLine>Sensitivity</BtnLine>
                <BtnLine><ChevronDown size={9} strokeWidth={1.5} style={{ marginTop: 4 }} /></BtnLine>
              </RibbonBtn>
            </GroupBody>
            <GroupLabel>Sensitivity</GroupLabel>
          </Group>
          <Group $w={63} $last>
            <GroupBody>
              <Btn w={62} icon={<PublishIcon />} lines={["Publish"]} />
            </GroupBody>
            <GroupLabel>Share</GroupLabel>
          </Group>
          <Collapse><ChevronUp size={14} strokeWidth={2.2} color="#323130" /></Collapse>
        </Ribbon>

        <Main>
          <Rail>
            <RailItem $active><ReportRailIcon /></RailItem>
            <RailItem><GridRailIcon /></RailItem>
            <RailItem><ModelRailIcon /></RailItem>
          </Rail>

          <Center>
            <Canvas>
              <PageEdge />

              <Card $x={24} $y={25} $w={235} $h={179}>
                <CardTitle>BÁO CÁO BÁN HÀNG</CardTitle>
                <TableWrap $w={219}>
                  <HeadRow $cols={COLS_SALES} $h={17}>
                    <HeadCell>ProductName</HeadCell>
                    <HeadCell>ReturnQuantity</HeadCell>
                    <HeadCell $sort="down">OrderQuantity</HeadCell>
                  </HeadRow>
                  <Rows $h={129}>
                    {products.map(([name, ret, qty, bar, tint], i) => (
                      <TableRow key={name} $cols={COLS_SALES}>
                        <Cell $bg={i % 2 ? "#f7f7f7" : "#fff"}>{name}</Cell>
                        <Cell $right $bg={i % 2 ? "#ebebeb" : "#fff"}>{ret}</Cell>
                        <Cell $right $bg={tint}>
                          <CellBar $left={3} style={{ width: bar }} />
                          <CellText>{qty}</CellText>
                        </Cell>
                      </TableRow>
                    ))}
                  </Rows>
                  <TotalRow $cols={COLS_SALES}>
                    <TotalCell>Total</TotalCell>
                    <TotalCell $right>1828</TotalCell>
                    <TotalCell $right>37054</TotalCell>
                  </TotalRow>
                </TableWrap>
                <ScrollTrack />
              </Card>

              <Card $x={330} $y={25} $w={296} $h={185}>
                <CardTitle>BÁO CÁO DOANH THU</CardTitle>
                <TableWrap $w={279}>
                  <HeadRow $cols={COLS_REV} $h={17}>
                    <HeadCell $sort="up">Month</HeadCell>
                    <HeadCell>Revenue</HeadCell>
                    <HeadCell>RevenueLastMonth</HeadCell>
                    <HeadCell>AccumulateRevenue</HeadCell>
                  </HeadRow>
                  <Rows $h={134}>
                    {months.map(([m, rev, last, acc, bar], i) => (
                      <TableRow key={m} $cols={COLS_REV}>
                        <Cell $bg={i % 2 ? "#ebebeb" : "#fff"}>{m}</Cell>
                        <Cell $right $bg={i % 2 ? "#ebebeb" : "#fff"}>
                          {bar > 0 && <CellBar $left={2} style={{ width: bar }} />}
                          <CellText>{rev}</CellText>
                        </Cell>
                        <Cell $right $bg={i % 2 ? "#ebebeb" : "#fff"}>{last}</Cell>
                        <Cell $right $bg={i % 2 ? "#ebebeb" : "#fff"}>{acc}</Cell>
                      </TableRow>
                    ))}
                  </Rows>
                  <TotalRow $cols={COLS_REV}>
                    <TotalCell>Total</TotalCell>
                    <TotalCell $right>7,358,462.31</TotalCell>
                    <TotalCell $right>7,358,462.31</TotalCell>
                    <TotalCell $right>7,358,462.31</TotalCell>
                  </TotalRow>
                </TableWrap>
              </Card>

              <HeaderIcons $x={540} $y={4}>
                <HeaderIcon><Filter size={17} strokeWidth={1} color={D} /></HeaderIcon>
                <HeaderIcon><FocusIcon /></HeaderIcon>
                <HeaderIcon><Dots /></HeaderIcon>
              </HeaderIcons>

              <MiniTable $x={225} $y={228} $w={58} $cols="58px">
                <MiniHead>AverageRevenue</MiniHead>
                <MiniCell $right>198.59</MiniCell>
              </MiniTable>
              <MiniTable $x={225} $y={303} $w={92} $cols="46px 46px">
                <MiniHead>SumProfit1</MiniHead>
                <MiniHead>SumProfit2</MiniHead>
                <MiniCell>3,117,451.68</MiniCell>
                <MiniCell>3,117,451.68</MiniCell>
              </MiniTable>

              <BigNumber $x={508} $y={236} $w={50} $size={28} $lh={34} $color="#252423" $align="center">4M</BigNumber>
              <FreeText $x={498} $y={270} $w={70} $size={7.4} $align="center">Revenue_quarter1</FreeText>

              <HeaderIcons $x={385} $y={263}>
                <HeaderIcon><Filter size={17} strokeWidth={1} color={D} /></HeaderIcon>
                <HeaderIcon><FocusIcon /></HeaderIcon>
                <HeaderIcon><Dots /></HeaderIcon>
              </HeaderIcons>

              <Slicer>
                <SlicerTitle>Slicer</SlicerTitle>
                <SlicerInputs>
                  <SlicerInput>1</SlicerInput>
                  <SlicerInput>5</SlicerInput>
                </SlicerInputs>
                <SlicerTrack>
                  <SlicerKnob $x={-7} />
                  <SlicerKnob $x={68} />
                </SlicerTrack>
                <Handle $corner={["top", "left"]} $pos="left: 0; top: 0;" />
                <Handle $corner={["top", "right"]} $pos="right: 0; top: 0;" />
                <Handle $corner={["bottom", "left"]} $pos="left: 0; bottom: 0;" />
                <Handle $corner={["bottom", "right"]} $pos="right: 0; bottom: 0;" />
                <Handle $wide $pos="left: 57px; top: 0;" />
                <Handle $wide $pos="left: 57px; bottom: 0;" />
                <Handle $pos="left: 0; top: 21px;" />
                <Handle $pos="right: 0; top: 21px;" />
              </Slicer>
            </Canvas>

            <PageTabs>
              <TabArrows>
                <Arrow />
                <Arrow $right />
              </TabArrows>
              <PageTab $active>Page 1</PageTab>
              <PageTab>Page 2</PageTab>
              <AddPage><Plus size={15} strokeWidth={3} color="#6b6a68" /></AddPage>
            </PageTabs>
          </Center>

          <FiltersPane>
            <PaneHead>
              <Filter size={18} strokeWidth={1.2} color="#323130" />
              <PaneTitle $ml={7}>Filters</PaneTitle>
              <PaneTool $w={18}><Eye size={13} strokeWidth={1.2} color={D} /></PaneTool>
              <PaneTool $w={42}><ChevronRight size={16} strokeWidth={1.2} color={D} /></PaneTool>
            </PaneHead>
            <SearchBox $w={183} $h={31} $ml={8} $pad={11} $line="#b3b0ad">
              <Search size={17} strokeWidth={1.1} style={{ transform: "scaleX(-1)" }} />
              Search
            </SearchBox>
            <PaneRule $mt={6} />
            <FilterSection $mt={14}>
              <FilterHead>Filters on this visual<Dots w={12} /></FilterHead>
              <FilterBox $h={47} $left><span>Month</span><span>is (All)</span></FilterBox>
              <FilterBox $h={47} $mt={6}>Add data fields here</FilterBox>
            </FilterSection>
            <FilterSection $mt={25}>
              <FilterHead>Filters on this page<Dots w={12} /></FilterHead>
              <FilterBox $h={48}>Add data fields here</FilterBox>
            </FilterSection>
            <FilterSection $mt={25}>
              <FilterHead>Filters on all pages<Dots w={12} /></FilterHead>
              <FilterBox $h={47}>Add data fields here</FilterBox>
            </FilterSection>
          </FiltersPane>

          <VizPane>
            <VizHead>
              <PaneTitle>Visualizations</PaneTitle>
              <ChevronRight size={16} strokeWidth={1.2} color={D} />
            </VizHead>
            <VizGrid>
              {vizIcons.map((icon, i) => (
                <VizCell key={i} $on={i === 24}>
                  {i === 27 || i === 28 || i === 36 ? icon : <VizSvg>{icon}</VizSvg>}
                </VizCell>
              ))}
            </VizGrid>
            <VizTabs>
              <VizTab $on><FieldsTabIcon /></VizTab>
              <VizTab><RollerIcon /></VizTab>
              <VizTab><AnalyticsIcon /></VizTab>
            </VizTabs>
            <WellLabel>Field</WellLabel>
            <Well>
              <Pill>
                <PillName>Month</PillName>
                <ChevronDown size={14} strokeWidth={1.1} color={D} />
                <X size={12} strokeWidth={1.1} color={D} />
              </Pill>
            </Well>
            <DrillTitle>Drill through</DrillTitle>
            <OptionLabel $mt={14}>Cross-report</OptionLabel>
            <ToggleRow $mt={13}>
              <ToggleName $w={21}>Off</ToggleName>
              <Knob />
              <KnobLine $w={18} />
            </ToggleRow>
            <OptionLabel $mt={20}>Keep all filters</OptionLabel>
            <ToggleRow $mt={14}>
              <ToggleName $w={20}>On</ToggleName>
              <KnobLine $w={18} />
              <Knob $on />
            </ToggleRow>
            <WellStub />
            <Scroller $x={178} $y={258} $w={6} $h={224} />
          </VizPane>

          <FieldsPane>
            <VizHead>
              <PaneTitle>Fields</PaneTitle>
              <ChevronRight size={16} strokeWidth={1.2} color={D} />
            </VizHead>
            <SearchBox $w={175} $h={26} $ml={5} $pad={8} $line="#8a8886">
              <Search size={15} strokeWidth={1.1} style={{ transform: "scaleX(-1)" }} />
              Search
            </SearchBox>
            <FieldRule />
            <FieldList>
              {fields.map(([name, icon, opt = {}]) => (
                <FieldRow key={name} $pad={24}>
                  <Chevron $w={16}>{opt.chev && <ChevronRight size={14} strokeWidth={1.1} color={D} />}</Chevron>
                  <CheckBox $on={opt.on}>{opt.on && <Check size={10} strokeWidth={1.6} color="#7a6420" />}</CheckBox>
                  <FieldIcon $w={17}>{fieldIcon[icon]}</FieldIcon>
                  <span style={{ marginLeft: 3 }}>{name}</span>
                </FieldRow>
              ))}
              {["COVID-19 pandemic ...", "Table"].map((name) => (
                <FieldRow key={name} $pad={8}>
                  <Chevron $w={15}><ChevronRight size={14} strokeWidth={1.1} color={D} /></Chevron>
                  <FieldIcon $w={14}><TableField /></FieldIcon>
                  <span style={{ marginLeft: 5 }}>{name}</span>
                </FieldRow>
              ))}
            </FieldList>
            <Scroller $x={172} $y={247} $w={7} $h={258} />
          </FieldsPane>
        </Main>

        <StatusBar>Page 1 of 2</StatusBar>
      </Page>
    </>
  );
};

export default App;
